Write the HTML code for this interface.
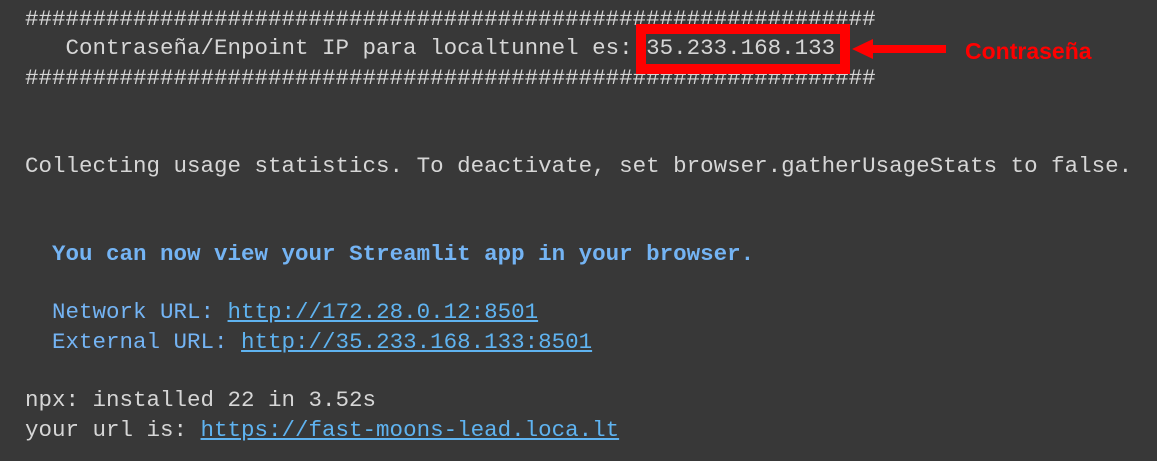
<!DOCTYPE html>
<html><head><meta charset="utf-8"><style>
html,body{margin:0;padding:0;background:#383838;width:1157px;height:461px;overflow:hidden}
pre{position:absolute;left:25px;top:5px;margin:0;font-family:"Liberation Mono","DejaVu Sans Mono",monospace;font-size:22.5px;line-height:29.35px;color:#d6d6d6}
.b{color:#74b4f4}
.bb{color:#74b4f4;font-weight:bold}
a{color:#5fb3f0;text-decoration:underline}
.box{position:absolute;left:636px;top:24px;width:194px;height:30px;border:10px solid #ff0000}
.lbl{position:absolute;left:965px;top:38px;font-family:"Liberation Sans",sans-serif;font-weight:bold;font-size:23px;color:#ff0000}
</style></head><body>
<pre>###############################################################
   Contraseña/Enpoint IP para localtunnel es: 35.233.168.133
###############################################################


Collecting usage statistics. To deactivate, set browser.gatherUsageStats to false.


  <span class="bb">You can now view your Streamlit app in your browser.</span>

  <span class="b">Network URL: </span><a>http://172.28.0.12:8501</a>
  <span class="b">External URL: </span><a>http://35.233.168.133:8501</a>

npx: installed 22 in 3.52s
your url is: <a>https://fast-moons-lead.loca.lt</a></pre>
<div class="box"></div>
<svg style="position:absolute;left:850px;top:36px" width="100" height="26"><rect x="18" y="9" width="78" height="8" fill="#ff0000"/><polygon points="2,13 23,3 23,23" fill="#ff0000"/></svg>
<div class="lbl">Contraseña</div>
</body></html>
